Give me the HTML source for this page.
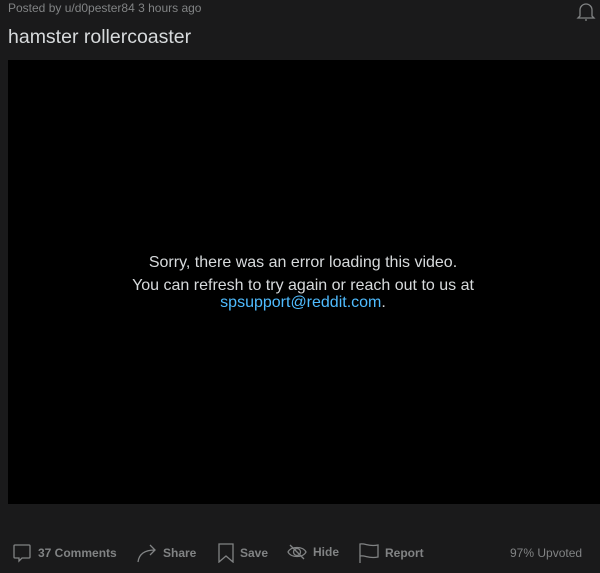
<!DOCTYPE html>
<html><head><style>
body{margin:0;width:600px;height:573px;background:#1a1a1b;font-family:"Liberation Sans",sans-serif;position:relative;overflow:hidden}
.meta{position:absolute;left:8px;top:1px;font-size:12px;color:#818384}
.title{position:absolute;left:8px;top:26px;font-size:19.5px;color:#d7dadc}
.video{position:absolute;left:8px;top:60px;width:592px;height:444px;background:#000}
.msg{position:absolute;left:0;width:606px;text-align:center;color:#d7dadc;font-size:16px}
.msg a{color:#4fbcff;text-decoration:none}
.bar{position:absolute;top:543px;font-size:12px;font-weight:bold;color:#818384;display:flex;align-items:center}
.bar svg{margin-right:6px}
</style></head><body>
<div class="meta">Posted by u/d0pester84 3 hours ago</div>
<svg style="position:absolute;left:576px;top:1px" width="20" height="21" viewBox="0 0 20 21" fill="none" stroke="#818384" stroke-width="1.3"><path d="M4 15V9a6 6 0 0 1 12 0v6l2 2H2z"/><path d="M9 19h2"/></svg>
<div class="title">hamster rollercoaster</div>
<div class="video"></div>
<div class="msg" style="top:254px">Sorry, there was an error loading this video.</div>
<div class="msg" style="top:277px;line-height:17px">You can refresh to try again or reach out to us at<br><a>spsupport@reddit.com</a>.</div>
<div class="bar" style="left:12px"><svg width="20" height="20" viewBox="0 0 20 20" fill="none" stroke="#818384" stroke-width="1.3"><path d="M3 2h14a1 1 0 0 1 1 1v11a1 1 0 0 1-1 1H10l-3 3v-3H3a1 1 0 0 1-1-1V3a1 1 0 0 1 1-1z"/></svg>37 Comments</div>
<div class="bar" style="left:137px"><svg width="20" height="20" viewBox="0 0 20 20" fill="none" stroke="#818384" stroke-width="1.3"><path d="M1 19C2 11 8 7 18 7M13 2l5 5-5 5"/></svg>Share</div>
<div class="bar" style="left:218px"><svg width="16" height="20" viewBox="0 0 16 20" fill="none" stroke="#818384" stroke-width="1.3"><path d="M1 1h14v18l-7-6-7 6z"/></svg>Save</div>
<div class="bar" style="left:287px"><svg width="20" height="18" viewBox="0 0 20 18" fill="none" stroke="#818384" stroke-width="1.3"><path d="M1 9c3-6 15-6 18 0-3 6-15 6-18 0z"/><circle cx="10" cy="9" r="3.5"/><path d="M3 2l14 14"/></svg>Hide</div>
<div class="bar" style="left:359px"><svg width="20" height="20" viewBox="0 0 20 20" fill="none" stroke="#818384" stroke-width="1.3"><path d="M1 20V1c6-1 8 3 18 1v12c-10 2-12-2-18-1"/></svg>Report</div>
<div class="bar" style="left:510px;font-weight:normal;top:546px">97% Upvoted</div>
</body></html>
